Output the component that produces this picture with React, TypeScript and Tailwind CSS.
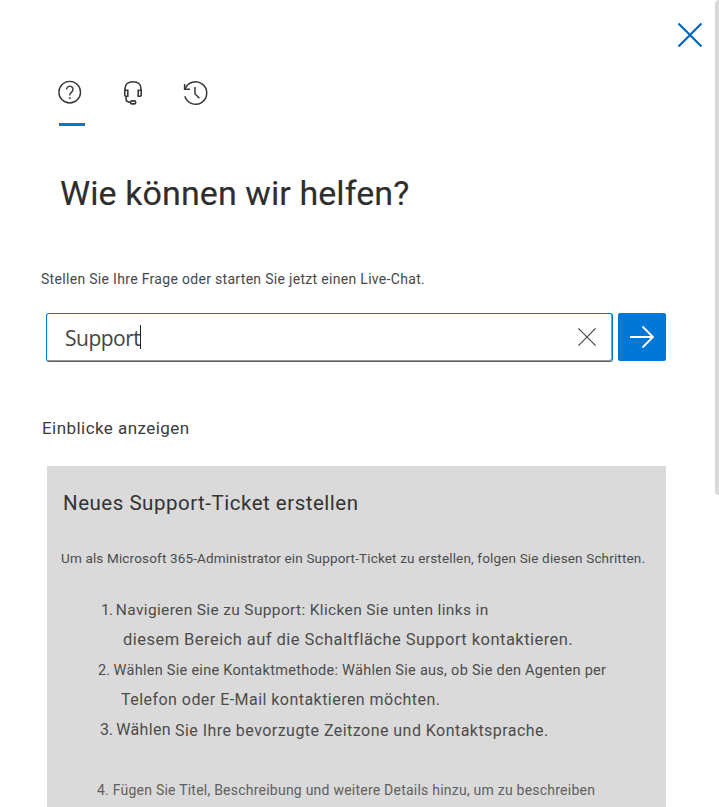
import React from "react";

function HelpIcon() {
  return (
    <svg className="block h-6 w-6" viewBox="0 0 24 24" fill="none" stroke="#383838" strokeWidth="1.4">
      <circle cx="11.7" cy="12.2" r="10.8" />
      <path d="M8.600 9.400a3.200 3.200 0 1 1 5.500 2.200c-1.500 1.200-2.400 1.900-2.400 4" />
      <path d="M10.900 18.100h1.700" strokeWidth="1.7" />
    </svg>
  );
}

function HeadsetIcon() {
  return (
    <svg className="block h-[25px] w-5" viewBox="0 0 20 25" fill="none" stroke="#383838" strokeWidth="1.600">
      <path d="M2 10V8.500C2 4.500 5 1.700 10 1.700s8 2.800 8 6.800V10" />
      <path d="M1.800 10.300h3v6h-2c-.7 0-1-.4-1-1zM18.200 10.300h-3v6h2c.7 0 1-.4 1-1z" />
      <path d="M3 16.300v2.200c0 2.500 1.300 3.800 4.500 3.800" />
      <rect x="7.500" y="20.900" width="5.200" height="3" rx="1.500" />
    </svg>
  );
}

function HistoryIcon() {
  return (
    <svg className="block h-[26px] w-[26px]" viewBox="0 0 26 26" fill="none" stroke="#383838" strokeWidth="1.5">
      <path d="M2 9.200A11.200 11.200 0 1 1 1.800 16.300" />
      <path d="M1.600 4v5.300H7" />
      <path d="M12 7v7l4.500 4.200" />
    </svg>
  );
}

function Cross({ className }: { className: string }) {
  return (
    <svg className={className} viewBox="0 0 24 24" fill="none" stroke="currentColor">
      <path d="M.5.5l23 23M23.500.5l-23 23" />
    </svg>
  );
}

export default function App() {
  return (
    <div className="flex h-[807px] w-[719px] justify-between overflow-hidden bg-white font-['Roboto',sans-serif] whitespace-nowrap text-[#333]">
      <main className="flex w-[703px] flex-col">
        <header className="flex h-[80px] justify-end pt-[23px] pr-[1px]">
          <button aria-label="Schließen" className="h-6 w-6 text-[#0067b8]">
            <Cross className="block h-6 w-6 stroke-[2.200]" />
          </button>
        </header>

        <nav className="flex h-[46px] pl-[58px]">
          <div className="flex w-[65px] flex-col justify-between">
            <HelpIcon />
            <span className="ml-px h-[3px] w-[26px] bg-[#0078d4]" />
          </div>
          <div className="w-[60px]"><HeadsetIcon /></div>
          <HistoryIcon />
        </nav>

        <h1 className="mt-[47px] h-10 pl-[60px] text-[34px] leading-10 tracking-[0.090px] text-[#2e2e2e] [-webkit-text-stroke:0.150px_#2e2e2e]">Wie können wir helfen?</h1>
        <p className="mt-[56px] h-5 pl-[41px] text-[14px] leading-5 tracking-[0.310px] text-[#484848]">Stellen Sie Ihre Frage oder starten Sie jetzt einen Live-Chat.</p>

        <div className="mt-6 flex gap-[5px] pl-[46px]">
          <div className="flex h-[49px] w-[567px] items-center justify-between rounded-[3px] border border-[#0078d4] border-b-[#605e5c] pr-4 pl-[18px] shadow-[inset_-1px_-1px_0_#999]">
            <div className="flex items-center">
              <span className="font-['Open_Sans',sans-serif] text-[21px] leading-6 tracking-[-0.500px] text-[#444]">Support</span>
              <span className="mb-px h-6 w-px bg-[#222]" />
            </div>
            <Cross className="mb-[2px] h-[18px] w-[18px] stroke-[1.500] text-[#444]" />
          </div>
          <button aria-label="Suchen" className="flex h-12 w-12 items-center justify-center rounded-[2px] bg-[#0078d7] text-white">
            <svg className="block h-6 w-6" viewBox="0 0 24 24" fill="none" stroke="currentColor" strokeWidth="1.800">
              <path d="M0 12h23M12.500 1.500L23 12 12.500 22.500" />
            </svg>
          </button>
        </div>

        <h2 className="mt-[56px] h-5 pl-[42px] text-[17px] leading-5 tracking-[0.440px] text-[#3b3b3b]">Einblicke anzeigen</h2>

        <section className="mt-[28px] ml-[47px] flex w-[619px] grow flex-col bg-[#dadada] text-[#4c4c4c]">
          <h3 className="mt-[22px] h-[30px] pl-4 text-[20.500px] leading-[30px] tracking-[0.510px] text-[#333]">Neues Support-Ticket erstellen</h3>
          <p className="mt-[25px] h-[30px] pl-[14px] text-[13.500px] leading-[30px] tracking-[0.158px]">Um als Microsoft 365-Administrator ein Support-Ticket zu erstellen, folgen Sie diesen Schritten.</p>
          <div className="mt-[22px] flex flex-col leading-[30px]">
            <p className="pl-[54px] text-[15.500px] tracking-[0.350px]"><span className="tracking-[-0.600px]">1. </span>Navigieren Sie zu Support: Klicken Sie unten links in</p>
            <p className="pl-[76px] text-[16.500px] tracking-[0.460px]">diesem Bereich auf die Schaltfläche Support kontaktieren.</p>
            <p className="h-[30px] pt-px pl-[51px] text-[14.500px] tracking-[0.280px]"><span className="tracking-[0px]">2. </span>Wählen Sie eine Kontaktmethode: Wählen Sie aus, ob Sie den Agenten per</p>
            <p className="pl-[74px] text-[16px] tracking-[0.460px]">Telefon oder E-Mail kontaktieren möchten.</p>
            <div className="flex text-[16px]">
              <p className="w-[128px] pl-[53px] tracking-[0.350px]"><span className="tracking-[-0.300px]">3. </span>Wählen</p>
              <p className="h-[30px] pt-px tracking-[0.460px]">Sie Ihre bevorzugte Zeitzone und Kontaktsprache.</p>
            </div>
            <p className="mt-[30px] pl-[50px] text-[14px] tracking-[0.230px] text-[#606060]">4. Fügen Sie Titel, Beschreibung und weitere Details hinzu, um zu beschreiben</p>
          </div>
        </section>
      </main>
      <div className="h-[495px] w-[4px] rounded-l-[4px] bg-[#d9d9d9]" />
    </div>
  );
}
